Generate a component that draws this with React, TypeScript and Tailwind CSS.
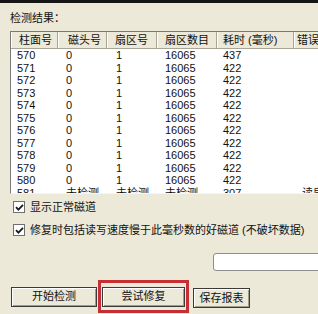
import { Fragment } from "react";

const font = "font-['Liberation_Sans','Noto_Sans_CJK_SC',sans-serif]";

const columns = [
  { title: "柱面号", width: "w-[47px]", headPad: "pl-[8px]", cellPad: "pl-[6px]" },
  { title: "磁头号", width: "w-[49px]", headPad: "pl-[10px]", cellPad: "pl-[8px]" },
  { title: "扇区号", width: "w-[50px]", headPad: "pl-[8px]", cellPad: "pl-[9px]" },
  { title: "扇区数目", width: "w-[60px]", headPad: "pl-[8px]", cellPad: "pl-[8px]" },
  { title: "耗时 (毫秒)", width: "w-[77px]", headPad: "pl-[6px]", cellPad: "pl-[6px]" },
  { title: "错误信息", width: "w-[80px]", headPad: "pl-[3px]", cellPad: "pl-[8px]" }
];

const rows: string[][] = [
  ["570", "0", "1", "16065", "437", ""],
  ...Array.from({ length: 10 }, (_, i) => [String(571 + i), "0", "1", "16065", "422", ""]),
  ["581", "未检测", "未检测", "未检测", "307", "读扇区错误"]
];

function CheckBox() {
  return (
    <span className="flex h-[12px] w-[12px] shrink-0 items-center justify-center border border-[#6f6f6f] bg-white">
      <svg width="9" height="9" viewBox="0 0 9 9">
        <path d="M1 4.2 L3.4 6.6 L8 1.8" fill="none" stroke="#1a1a1a" strokeWidth="1.8" />
      </svg>
    </span>
  );
}

function XpButton({ label, width }: { label: string; width: string }) {
  return (
    <button
      type="button"
      className={`${width} h-[20px] border border-[#3a3a3a] bg-[#ece9d8] text-[11px] leading-none text-[#111] shadow-[inset_1px_1px_0_#ffffff,inset_-1px_-1px_0_#a29e8c]`}
    >
      {label}
    </button>
  );
}

export default function App() {
  return (
    <div className={`${font} h-[314px] w-[318px] overflow-hidden bg-[#ece9d8] text-[#111]`}>
      <div className="h-[3px] bg-[#151515]" />
      <p className="ml-[10px] mt-[9px] h-[12px] text-[11px] leading-[12px]">检测结果：</p>

      <div className="ml-[10px] mt-[7px] h-[163px] w-[372px] overflow-hidden border-l border-t border-b border-l-[#7a7a7a] border-t-[#7a7a7a] border-b-[#f6f5ee] bg-white">
        <div className="flex h-[17px] border-b border-[#a8a596] bg-[#ece9d8]">
          {columns.map((c) => (
            <div
              key={c.title}
              className={`${c.width} ${c.headPad} flex shrink-0 items-center border-r border-[#a8a596] text-[11px] leading-none shadow-[inset_1px_0_0_#ffffff]`}
            >
              {c.title}
            </div>
          ))}
        </div>
        <div className="grid grid-cols-[47px_49px_50px_60px_77px_80px]">
          {rows.map((r) => (
            <Fragment key={r[0]}>
              {r.map((v, i) => (
                <div key={i} className={`${columns[i].cellPad} h-[12.5px] whitespace-nowrap text-[11px] leading-[12.5px]`}>
                  {v}
                </div>
              ))}
            </Fragment>
          ))}
        </div>
      </div>

      <label className="ml-[13px] mt-[7px] flex h-[12px] items-center gap-[5px] text-[11px] leading-none">
        <CheckBox />
        <span>显示正常磁道</span>
      </label>
      <label className="ml-[13px] mt-[11px] flex h-[12px] items-center gap-[5px] whitespace-nowrap text-[11px] leading-none">
        <CheckBox />
        <span>修复时包括读写速度慢于此毫秒数的好磁道 (不破坏数据)</span>
      </label>

      <div className="ml-[213px] mt-[17px] h-[18px] w-[130px] rounded-[3px] border border-[#8d8d8d] bg-white" />

      <div className="ml-[11px] mt-[9px] flex items-center">
        <XpButton label="开始检测" width="w-[86px]" />
        <div className="ml-[1px] flex h-[33px] w-[91px] items-center justify-center border-[3px] border-[#c62f33]">
          <XpButton label="尝试修复" width="w-[83px]" />
        </div>
        <div className="ml-[4px]">
          <XpButton label="保存报表" width="w-[57px]" />
        </div>
      </div>
    </div>
  );
}
